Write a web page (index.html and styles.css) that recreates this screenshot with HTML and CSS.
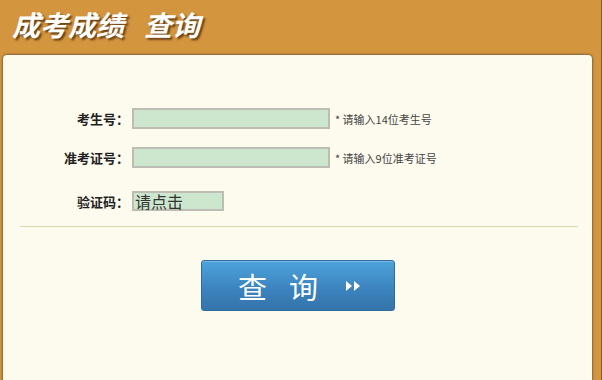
FILE: index.html
```html
<!DOCTYPE html>
<html lang="zh-CN">
<head>
    <meta charset="UTF-8">
    <title>成考成绩查询</title>
    <link rel="stylesheet" href="styles.css">
</head>
<body>
    <div class="page">
        <!-- Header -->
        <div class="header">
            <h1>成考成绩<span class="gap"></span>查询</h1>
        </div>

        <!-- Query panel -->
        <div class="panel">
            <form class="query-form">
                <div class="row row-first">
                    <label class="label">考生号：</label>
                    <input type="text" class="field">
                    <span class="hint">* 请输入14位考生号</span>
                </div>
                <div class="row">
                    <label class="label">准考证号：</label>
                    <input type="text" class="field">
                    <span class="hint">* 请输入9位准考证号</span>
                </div>
                <div class="row row-code">
                    <label class="label">验证码：</label>
                    <div class="code-box">请点击</div>
                </div>
            </form>

            <div class="divider"></div>

            <div class="actions">
                <button class="query-btn" type="button">
                    <span class="btn-text">查</span>
                    <span class="btn-text">询</span>
                    <svg class="arrows" width="16" height="12" viewBox="0 0 16 12">
                        <polygon points="1,1 7,6 1,11" fill="#fff"/>
                        <polygon points="9,1 15,6 9,11" fill="#fff"/>
                    </svg>
                </button>
            </div>
        </div>
    </div>
</body>
</html>
```

FILE: styles.css
```css
/* Basic Styling */
body {
    margin: 0;
    font-family: "Liberation Sans", "Noto Sans CJK SC", sans-serif;
    background-color: #d4953f;
    overflow: hidden;
}

.page {
    width: 601px;
    height: 380px;
    border-right: 1px solid #8c5b22;
    display: flex;
    flex-direction: column;
}

/* Header */
.header {
    height: 55px;
    flex-shrink: 0;
}

.header h1 {
    margin: 0;
    padding: 4px 0 0 12px;
    font-family: "Noto Sans CJK SC", sans-serif;
    font-size: 28px;
    font-weight: bold;
    font-style: italic;
    line-height: 40px;
    color: #fff;
    text-shadow: 2px 2px 2px rgba(60, 30, 0, 0.7);
}

.header .gap {
    display: inline-block;
    width: 20px;
}

/* Panel */
.panel {
    flex-grow: 1;
    margin-left: 3px;
    width: 589px;
    background-color: #fdfaee;
    border-radius: 4px 4px 0 0;
    box-shadow: 0 0 2px 1px rgba(70, 60, 50, 0.55);
}

.query-form {
    padding-top: 53px;
}

.row {
    display: flex;
    align-items: center;
    height: 21px;
    margin-bottom: 18px;
}

.row-code {
    margin-top: 23px;
    margin-bottom: 0;
    height: 20px;
}

.label {
    width: 126px;
    text-align: right;
    font-family: "Noto Sans CJK SC", sans-serif;
    font-size: 13px;
    font-weight: bold;
    color: #222;
    padding-right: 3px;
}

.field {
    width: 194px;
    height: 17px;
    margin: 0;
    padding: 0;
    border: 2px solid #bdbdb5;
    background-color: #cde7cf;
}

.hint {
    margin-left: 5px;
    font-family: "Noto Sans CJK SC", sans-serif;
    font-size: 11px;
    color: #444;
}

.code-box {
    width: 87px;
    height: 16px;
    border: 2px solid #bdbdb5;
    background-color: #cde7cf;
    font-family: "Noto Sans CJK SC", sans-serif;
    font-size: 16px;
    line-height: 16px;
    color: #333;
    padding-left: 1px;
}

.divider {
    margin: 15px 0 0 17px;
    width: 558px;
    height: 1px;
    background-color: #dcd7ac;
}

/* Button */
.actions {
    padding: 33px 0 0 198px;
}

.query-btn {
    width: 194px;
    height: 51px;
    padding: 0 0 0 36px;
    display: flex;
    align-items: center;
    border: 1px solid #2e6c9e;
    border-radius: 3px;
    background: linear-gradient(#4da3dc, #3b82bd 60%, #3474aa);
    box-shadow: inset 0 1px 0 rgba(255, 255, 255, 0.25);
    cursor: pointer;
}

.btn-text {
    font-family: "Noto Sans CJK SC", sans-serif;
    font-size: 29px;
    line-height: 32px;
    color: #fff;
    margin-right: 22px;
}

.arrows {
    margin-left: 5px;
}
```
